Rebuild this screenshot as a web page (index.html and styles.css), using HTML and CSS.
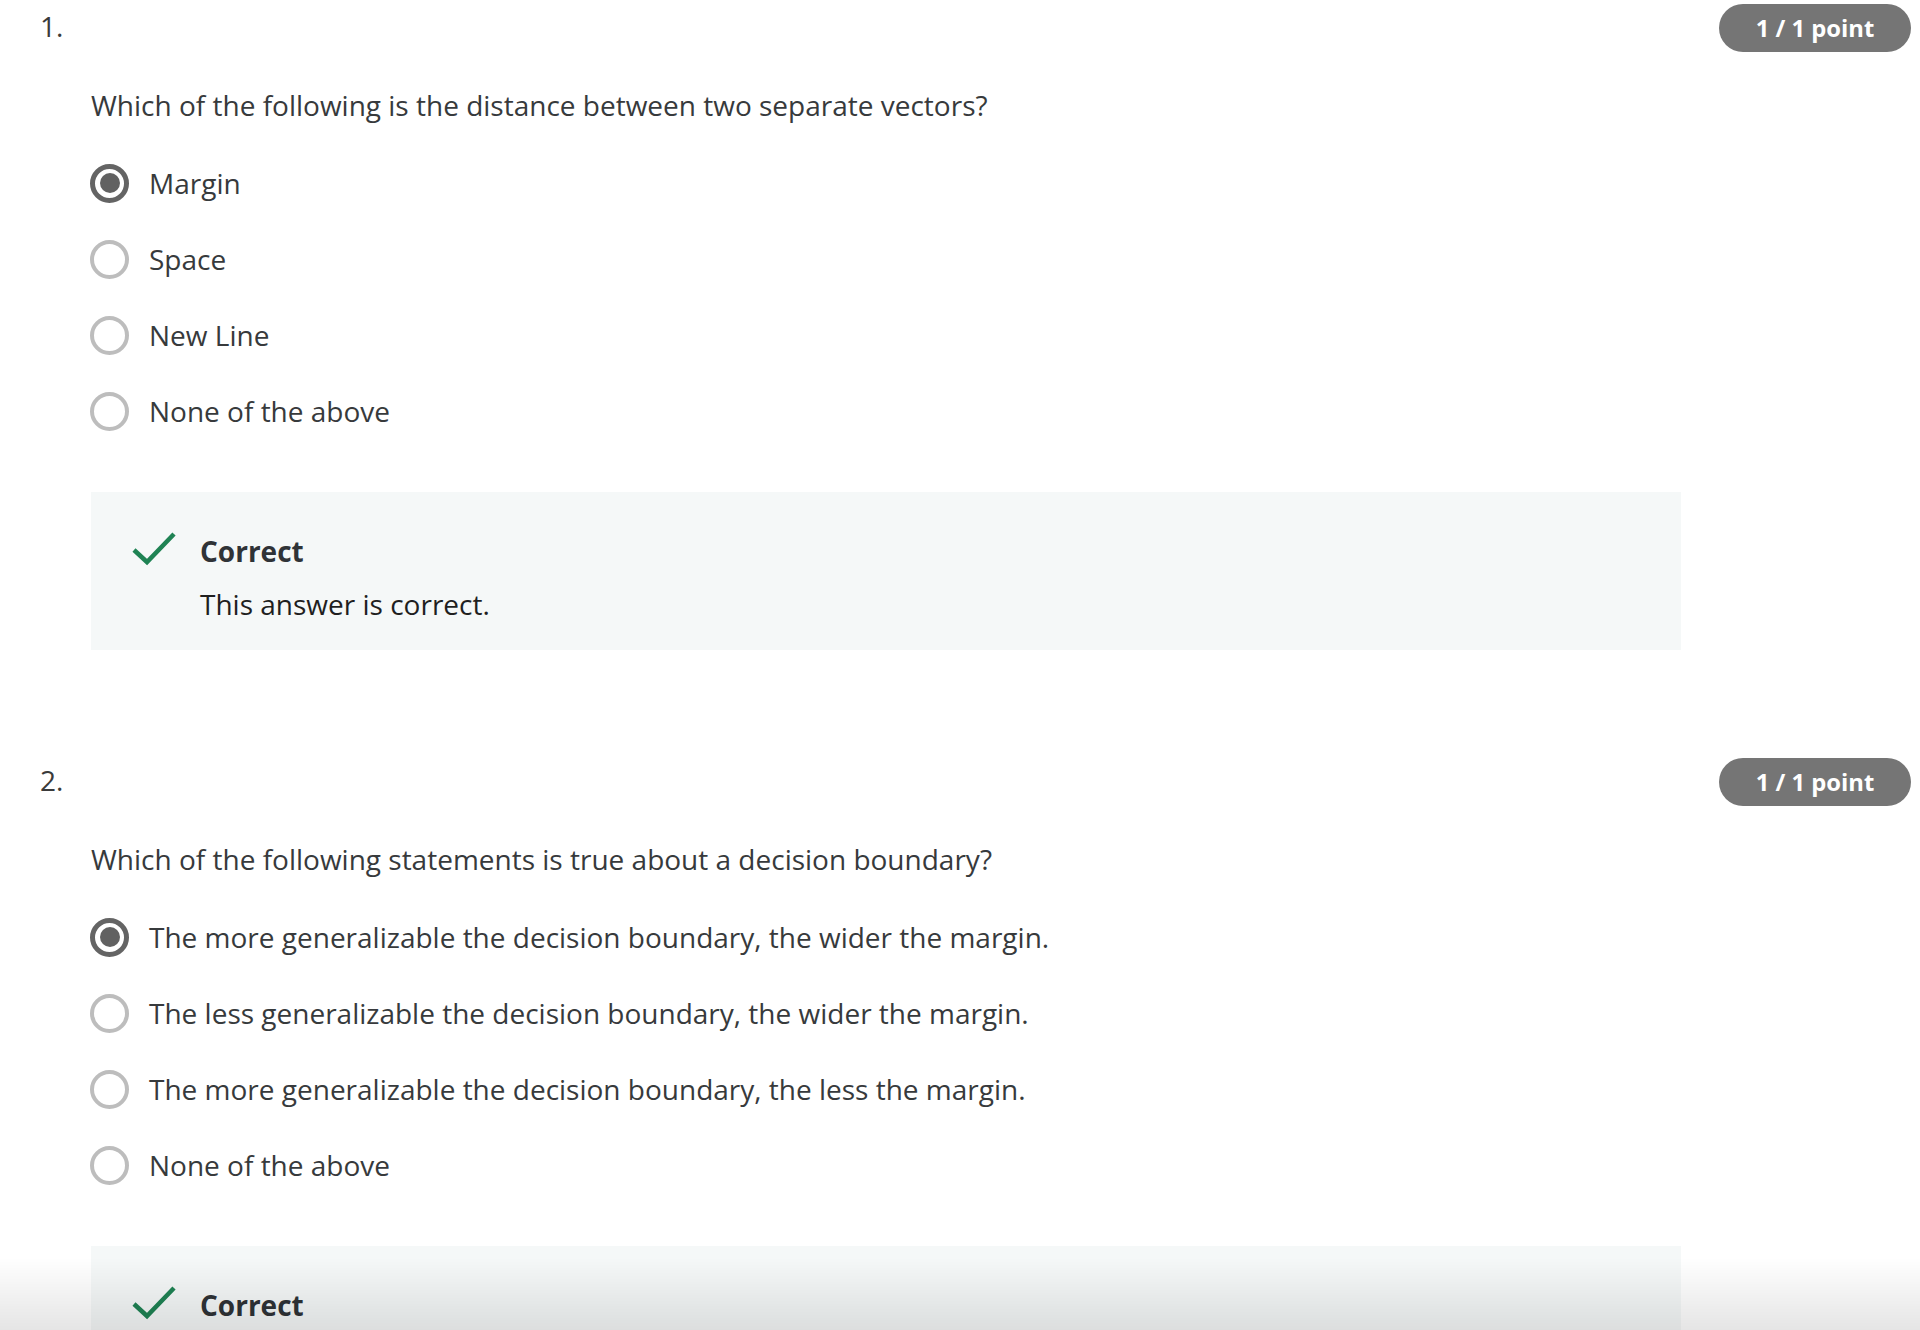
FILE: index.html
```html
<!DOCTYPE html>
<html lang="en">
<head>
<meta charset="utf-8">
<title>Quiz results</title>
<link rel="stylesheet" href="styles.css">
</head>
<body>
<main class="page">
  <section class="question">
    <div class="q-header">
      <span class="q-number">1.</span>
      <span class="badge">1 / 1 point</span>
    </div>
    <div class="q-body">
      <p class="q-text">Which of the following is the distance between two separate vectors?</p>
      <ul class="options">
        <li class="option"><span class="radio selected"></span><span class="opt-label">Margin</span></li>
        <li class="option"><span class="radio"></span><span class="opt-label">Space</span></li>
        <li class="option"><span class="radio"></span><span class="opt-label">New Line</span></li>
        <li class="option"><span class="radio"></span><span class="opt-label">None of the above</span></li>
      </ul>
      <div class="feedback">
        <svg class="check" viewBox="0 0 44 36" width="44" height="36" aria-hidden="true"><polyline points="2,20 15,32 42,4" fill="none" stroke="#1f8354" stroke-width="4.5"/></svg>
        <div class="fb-text">
          <div class="fb-title">Correct</div>
          <div class="fb-desc">This answer is correct.</div>
        </div>
      </div>
    </div>
  </section>

  <section class="question">
    <div class="q-header">
      <span class="q-number">2.</span>
      <span class="badge">1 / 1 point</span>
    </div>
    <div class="q-body">
      <p class="q-text">Which of the following statements is true about a decision boundary?</p>
      <ul class="options">
        <li class="option"><span class="radio selected"></span><span class="opt-label">The more generalizable the decision boundary, the wider the margin.</span></li>
        <li class="option"><span class="radio"></span><span class="opt-label">The less generalizable the decision boundary, the wider the margin.</span></li>
        <li class="option"><span class="radio"></span><span class="opt-label">The more generalizable the decision boundary, the less the margin.</span></li>
        <li class="option"><span class="radio"></span><span class="opt-label">None of the above</span></li>
      </ul>
      <div class="feedback">
        <svg class="check" viewBox="0 0 44 36" width="44" height="36" aria-hidden="true"><polyline points="2,20 15,32 42,4" fill="none" stroke="#1f8354" stroke-width="4.5"/></svg>
        <div class="fb-text">
          <div class="fb-title">Correct</div>
          <div class="fb-desc">This answer is correct.</div>
        </div>
      </div>
    </div>
  </section>
</main>
<div class="bottom-shade"></div>
</body>
</html>
```
FILE: styles.css
```css
html, body {
  margin: 0;
  padding: 0;
  overflow: hidden;
  background: #ffffff;
}

body {
  font-family: "Open Sans", "Liberation Sans", sans-serif;
  color: #373a3c;
  font-size: 28px;
}

.page {
  padding: 4px 9px 0 40px;
}

.question {
  margin-bottom: 108px;
}

.q-header {
  display: flex;
  justify-content: space-between;
  align-items: center;
  height: 48px;
}

.q-number {
  font-size: 28px;
  color: #3a3a3a;
  line-height: 36px;
  margin-top: -5px;
}

.badge {
  display: flex;
  align-items: center;
  justify-content: center;
  width: 192px;
  height: 48px;
  border-radius: 24px;
  background: #757575;
  color: #ffffff;
  font-weight: 700;
  font-size: 23.8px;
}

.q-body {
  padding-left: 51px;
}

.q-text {
  margin: 35px 0 0 0;
  line-height: 36px;
}

.options {
  list-style: none;
  margin: 22px 0 0 0;
  padding: 0;
}

.option {
  display: flex;
  align-items: center;
  height: 76px;
  gap: 20px;
}

.radio {
  box-sizing: border-box;
  width: 39px;
  height: 39px;
  border-radius: 50%;
  border: 4px solid #bdbdbd;
  flex: none;
  margin-left: -1px;
  display: flex;
  align-items: center;
  justify-content: center;
}

.radio.selected {
  border: 5px solid #646464;
}

.radio.selected::after {
  content: "";
  width: 20px;
  height: 20px;
  border-radius: 50%;
  background: #616161;
}

.opt-label {
  line-height: 36px;
}

.feedback {
  box-sizing: border-box;
  width: 1590px;
  margin-top: 43px;
  background: #f5f8f8;
  display: flex;
  align-items: flex-start;
  padding: 41px 0 28px 41px;
  gap: 24px;
}

.check {
  flex: none;
  margin-top: -3px;
}

.fb-title {
  font-weight: 700;
  line-height: 36px;
  color: #2f3337;
}

.fb-desc {
  margin-top: 17px;
  line-height: 36px;
  color: #1f1f1f;
}

.bottom-shade {
  position: fixed;
  left: 0;
  right: 0;
  bottom: 0;
  height: 72px;
  background: linear-gradient(to bottom, rgba(0, 0, 0, 0), rgba(0, 0, 0, 0.1));
  pointer-events: none;
}
```
